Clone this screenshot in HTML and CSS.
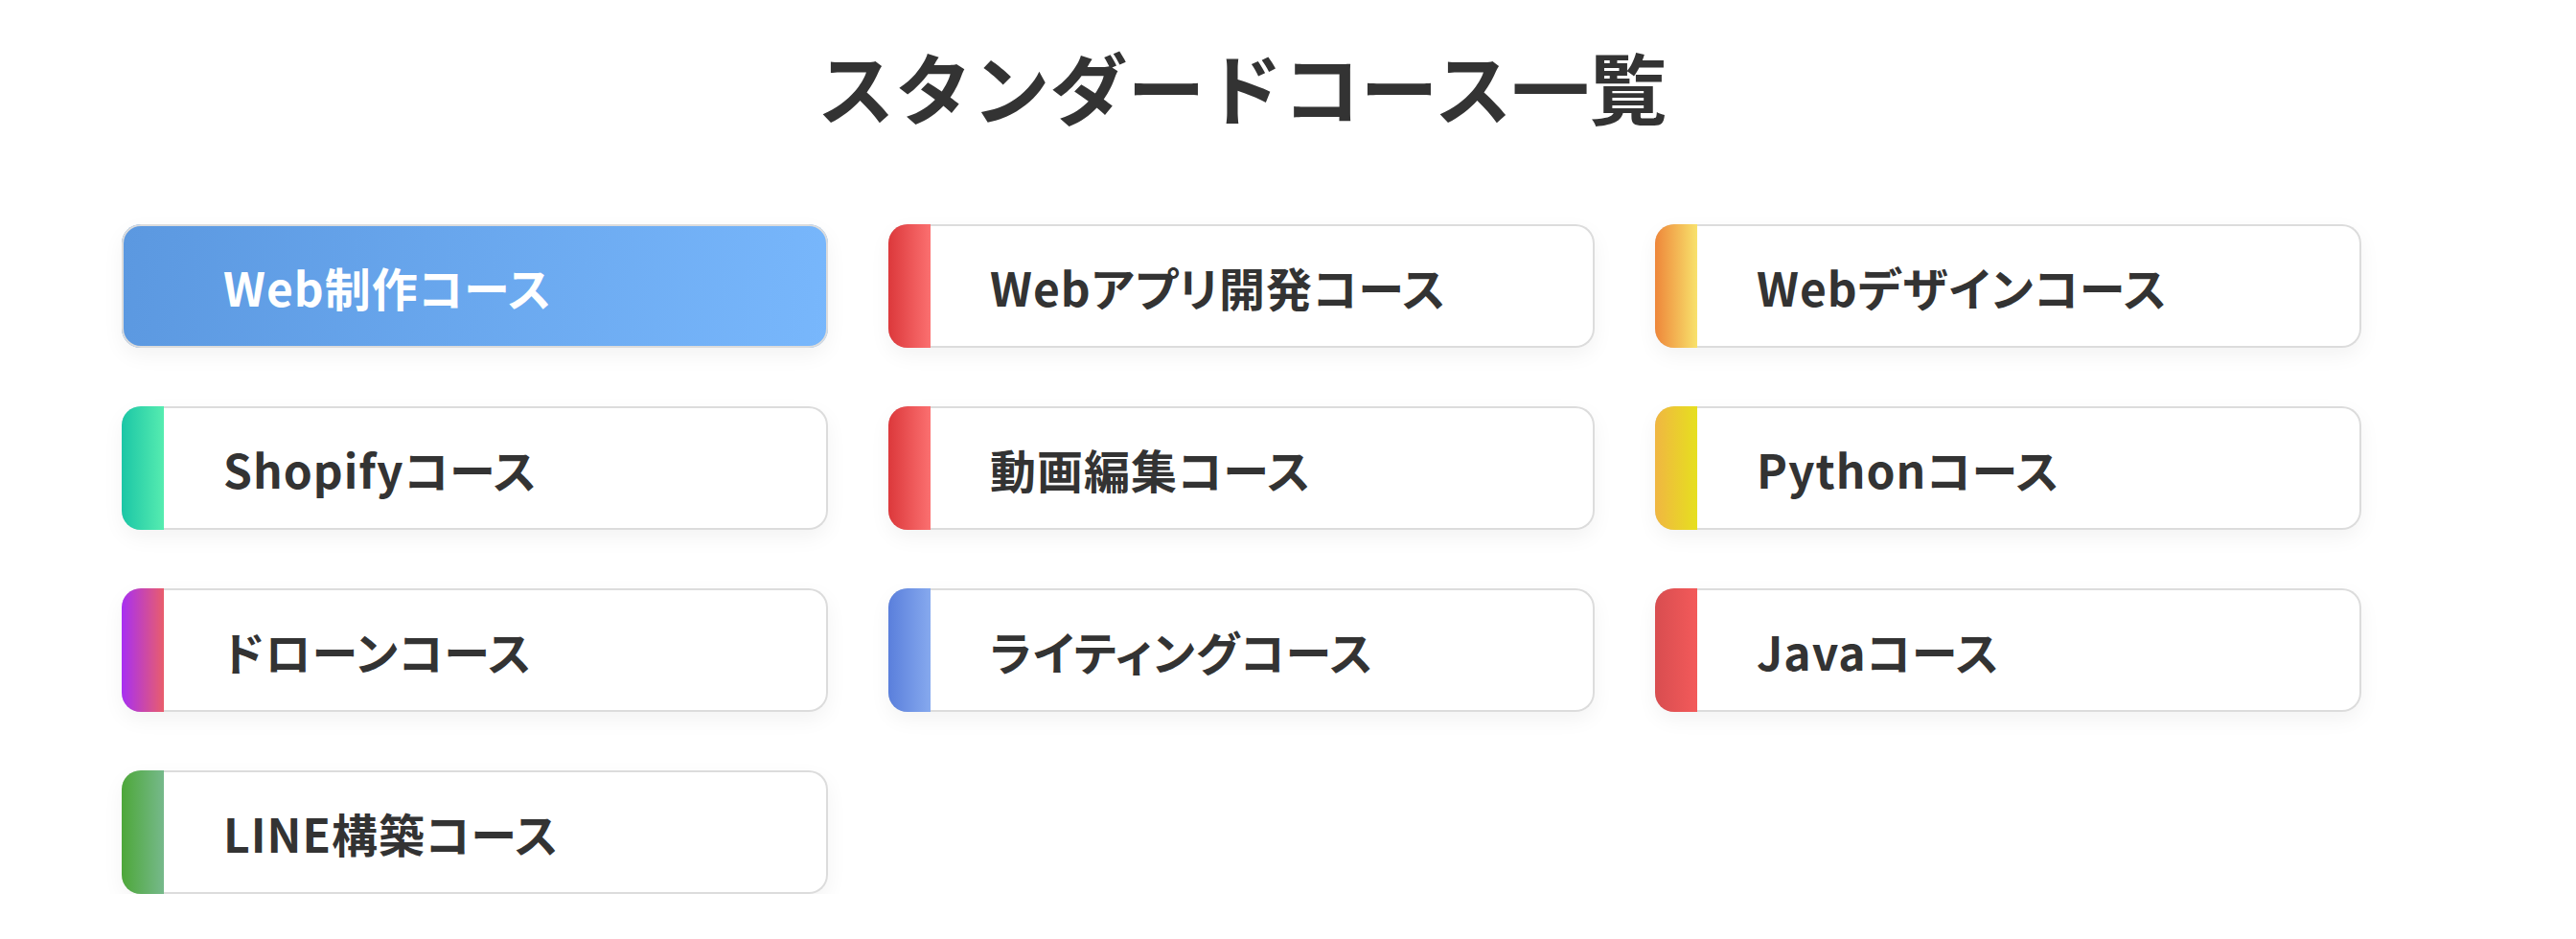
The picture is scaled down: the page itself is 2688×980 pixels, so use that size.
FILE: index.html
```html
<!DOCTYPE html>
<html lang="ja">
<head>
<meta charset="UTF-8">
<meta name="viewport" content="width=device-width, initial-scale=1.0">
<title>スタンダードコース一覧</title>
<link rel="stylesheet" href="styles.css">
</head>
<body>
    <div class="wrapper">
        <h2 class="title">スタンダードコース一覧</h2>

        <ul class="course-list">
            <li class="course active"><span class="bar"></span><span class="name">Web制作コース</span></li>
            <li class="course red"><span class="bar"></span><span class="name">Webアプリ開発コース</span></li>
            <li class="course orange"><span class="bar"></span><span class="name">Webデザインコース</span></li>
            <li class="course teal"><span class="bar"></span><span class="name">Shopifyコース</span></li>
            <li class="course red"><span class="bar"></span><span class="name">動画編集コース</span></li>
            <li class="course yellow"><span class="bar"></span><span class="name">Pythonコース</span></li>
            <li class="course purple"><span class="bar"></span><span class="name">ドローンコース</span></li>
            <li class="course blue"><span class="bar"></span><span class="name">ライティングコース</span></li>
            <li class="course coral"><span class="bar"></span><span class="name">Javaコース</span></li>
            <li class="course green"><span class="bar"></span><span class="name">LINE構築コース</span></li>
        </ul>
    </div>
</body>
</html>
```

FILE: styles.css
```css
/* course list */
*{
    margin: 0;
    padding: 0;
    box-sizing: border-box;
    font-family: "Noto Sans CJK JP", "Noto Sans", sans-serif;
}
body{
    background-color: #fff;
    color: #333;
}
.wrapper{
    width: 2338px;
    margin-left: 127px;
    padding-top: 36px;
}
.wrapper .title{
    font-size: 81px;
    font-weight: 700;
    line-height: 106px;
    text-align: center;
    color: #333;
    margin-bottom: 92px;
}
.course-list{
    list-style: none;
    display: grid;
    grid-template-columns: repeat(3, 737px);
    column-gap: 63px;
    row-gap: 61px;
}
.course{
    display: flex;
    align-items: center;
    height: 129px;
    background-color: #fff;
    border-radius: 20px;
    overflow: hidden;
    box-shadow: inset 0 0 0 2px #dcdcdc, 0 8px 22px rgba(0,0,0,0.05);
}
.course .bar{
    width: 44px;
    height: 100%;
    flex-shrink: 0;
}
.course .name{
    margin-left: 62px;
    font-size: 48px;
    font-weight: 700;
    line-height: 1;
    letter-spacing: 1px;
    font-feature-settings: "palt";
    color: #333;
}
.course.active{
    background: linear-gradient(100deg, #5b98e0, #78b7fc);
}
.course.active .name{
    color: #fff;
}
.red .bar{ background: linear-gradient(90deg, #dc383b, #fb7070); }
.orange .bar{ background: linear-gradient(90deg, #ee863a, #f8e26c); }
.teal .bar{ background: linear-gradient(90deg, #1bc6a6, #56ecb0); }
.yellow .bar{ background: linear-gradient(90deg, #f0b642, #e6e01e); }
.purple .bar{ background: linear-gradient(90deg, #a72ff2, #e95d6c); }
.blue .bar{ background: linear-gradient(90deg, #5a7fdc, #86a9ee); }
.coral .bar{ background: linear-gradient(90deg, #d84d50, #f35a5a); }
.green .bar{ background: linear-gradient(90deg, #4da739, #76b98b); }
```
